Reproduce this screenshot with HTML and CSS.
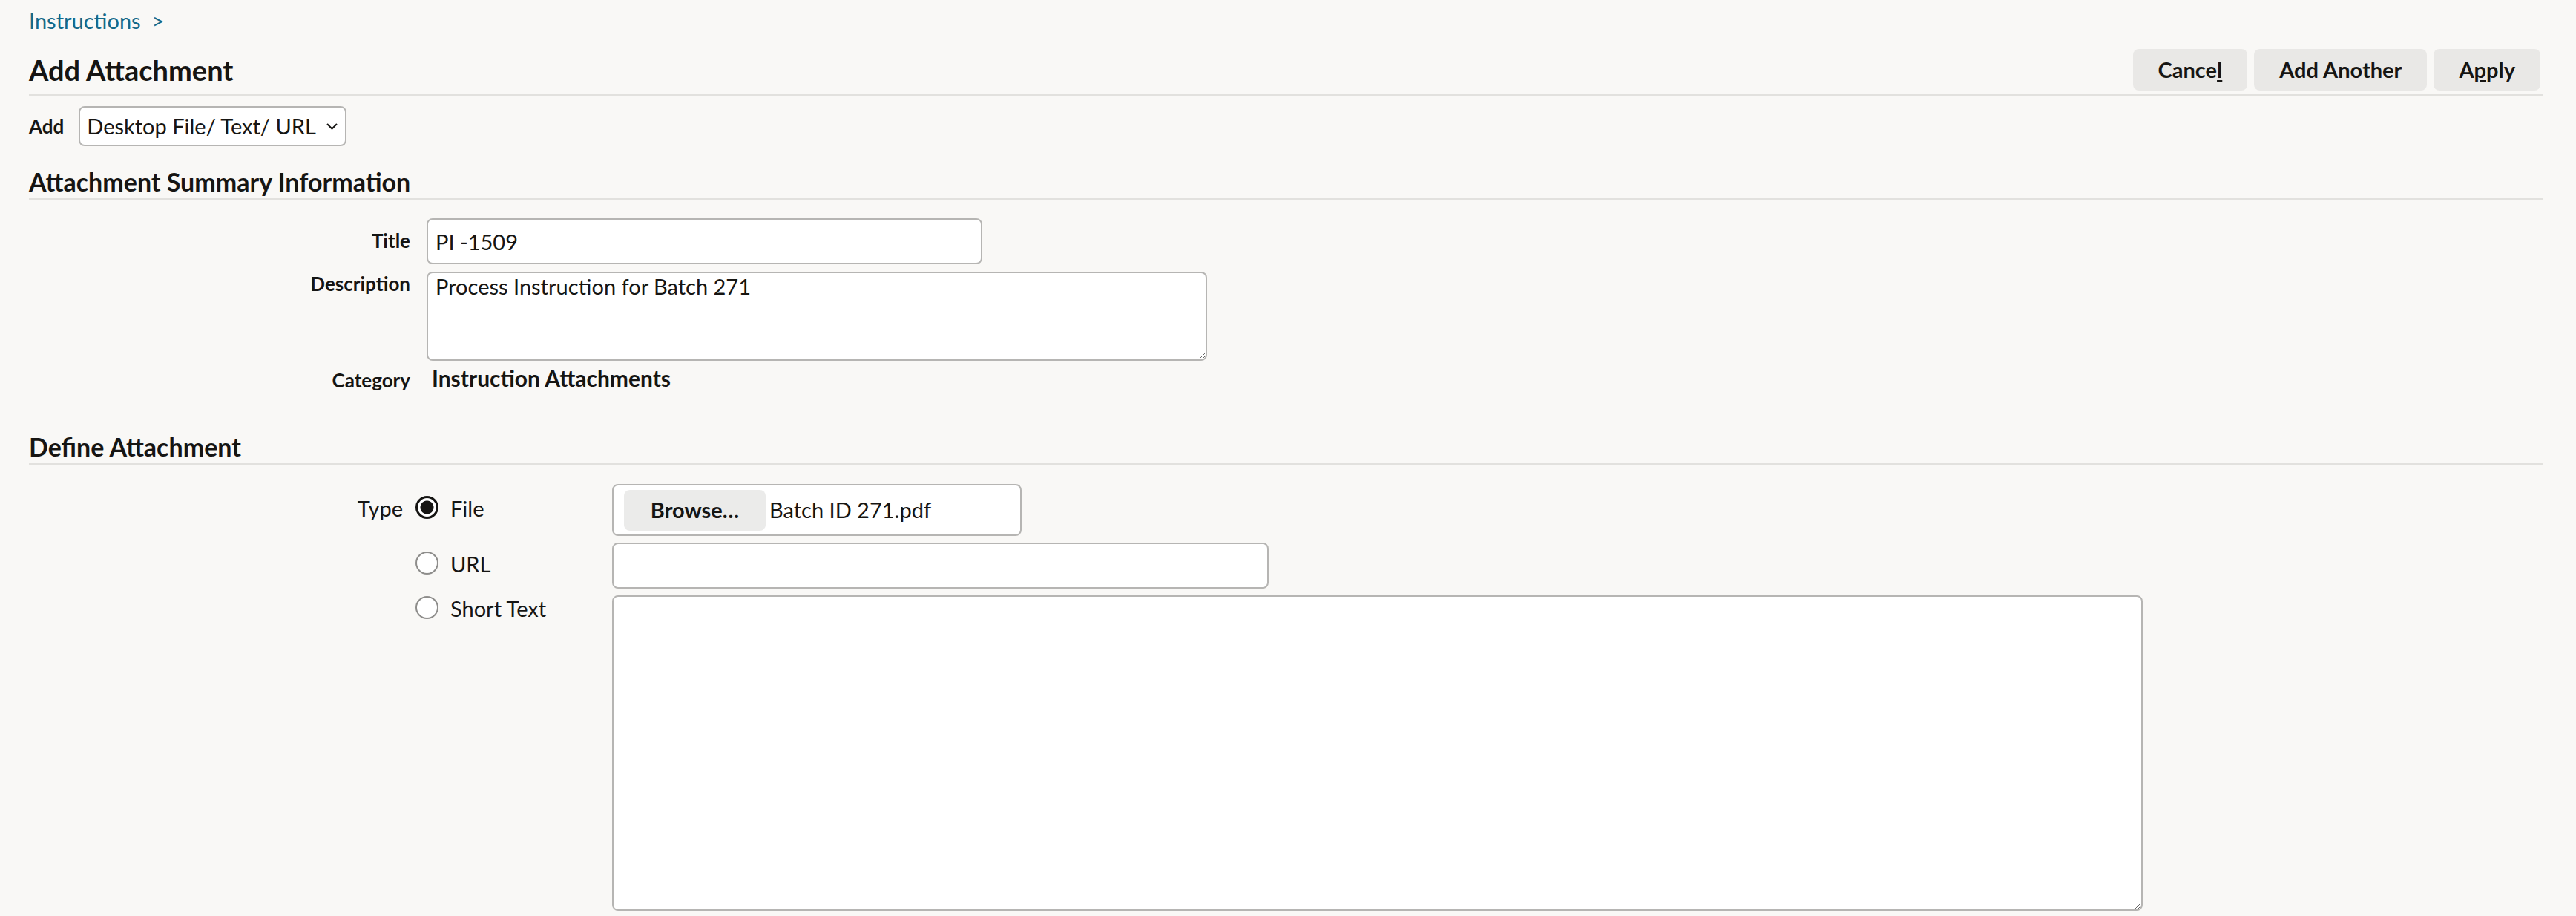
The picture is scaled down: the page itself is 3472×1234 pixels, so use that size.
FILE: index.html
```html
<!DOCTYPE html>
<html lang="en">
<head>
<meta charset="utf-8">
<title>Add Attachment</title>
<link rel="stylesheet" href="styles.css">
</head>
<body>
<div class="page">
  <nav class="crumbs"><a href="#">Instructions</a><span class="sep">&gt;</span></nav>

  <header class="page-head">
    <h1>Add Attachment</h1>
    <div class="actions">
      <button class="btn">Cance<u>l</u></button>
      <button class="btn">Add Another</button>
      <button class="btn">A<u>p</u>ply</button>
    </div>
  </header>

  <div class="add-row">
    <span class="add-label">Add</span>
    <div class="select">
      <span>Desktop File/ Text/ URL</span>
      <svg class="chev" width="15" height="9" viewBox="0 0 15 9"><polyline points="1,1 7.5,7.5 14,1" fill="none" stroke="#161513" stroke-width="2"/></svg>
    </div>
  </div>

  <h2 class="section">Attachment Summary Information</h2>
  <div class="summary">
    <div class="flabel title-label">Title</div>
    <input class="field title-input" type="text" value="PI -1509">
    <div class="flabel">Description</div>
    <textarea class="field desc">Process Instruction for Batch 271</textarea>
    <div class="flabel">Category</div>
    <div class="value">Instruction Attachments</div>
  </div>

  <h2 class="section define-head">Define Attachment</h2>
  <div class="define">
    <div class="dlabel">Type</div>
    <label class="opt r1"><input type="radio" name="type" checked><span>File</span></label>
    <div class="filebox"><span class="browse">Browse…</span><span class="fname">Batch ID 271.pdf</span></div>

    <div></div>
    <label class="opt r2"><input type="radio" name="type"><span>URL</span></label>
    <input class="field url" type="text" value="">

    <div></div>
    <label class="opt r3"><input type="radio" name="type"><span>Short Text</span></label>
    <textarea class="field shorttext"></textarea>
  </div>
</div>
</body>
</html>
```
FILE: styles.css
```css
html, body {
  margin: 0;
  background: #f9f8f6;
}
body {
  color: #161513;
  font-family: Lato, "Noto Sans", sans-serif;
  font-size: 29px;
  line-height: 36px;
}
.page {
  padding: 10px 44px 0 39px;
}
.crumbs {
  font-size: 29px;
  line-height: 36px;
  color: #13698a;
}
.crumbs a {
  color: #13698a;
  text-decoration: none;
}
.crumbs .sep {
  margin-left: 15px;
}
.page-head {
  display: flex;
  align-items: center;
  justify-content: space-between;
  margin-top: 20px;
  padding-bottom: 5px;
  border-bottom: 2px solid #e2e1de;
}
.page-head h1 {
  margin: 0;
  font-size: 38px;
  line-height: 44px;
  font-weight: 700;
}
.actions {
  display: flex;
  gap: 9px;
  padding-right: 4px;
}
.btn {
  height: 56px;
  padding: 0 34px;
  border: 0;
  border-radius: 8px;
  background: #e9e8e6;
  color: #161513;
  font-family: Lato, "Noto Sans", sans-serif;
  font-size: 29px;
  font-weight: 700;
  line-height: 56px;
}
.btn u {
  text-underline-offset: 3px;
}
.add-row {
  display: flex;
  align-items: center;
  gap: 20px;
  margin-top: 14px;
}
.add-label {
  font-size: 26px;
  font-weight: 700;
  line-height: 32px;
}
.select {
  box-sizing: border-box;
  width: 361px;
  height: 54px;
  display: flex;
  align-items: center;
  justify-content: space-between;
  padding: 0 10px 0 9px;
  background: #fff;
  border: 2px solid #b6b5b3;
  border-radius: 8px;
  font-size: 29px;
  line-height: 36px;
}
.chev {
  display: block;
}
.section {
  margin: 28px 0 0;
  font-size: 34px;
  line-height: 40px;
  font-weight: 700;
  padding-bottom: 2px;
  border-bottom: 2px solid #e2e1de;
}
.define-head {
  margin-top: 54px;
}
.summary {
  display: grid;
  grid-template-columns: 514px 1fr;
  column-gap: 22px;
  row-gap: 10px;
  margin-top: 25px;
  align-items: start;
}
.flabel {
  text-align: right;
  font-size: 26px;
  font-weight: 700;
  line-height: 32px;
}
.title-label {
  padding-top: 14px;
}
.field {
  box-sizing: border-box;
  display: block;
  margin: 0;
  background: #fff;
  border: 2px solid #b6b5b3;
  border-radius: 8px;
  color: #161513;
  font-family: Lato, "Noto Sans", sans-serif;
  font-size: 29px;
  line-height: 36px;
  padding: 0 10px;
  outline: none;
}
.title-input {
  width: 749px;
  height: 62px;
}
.desc {
  width: 1052px;
  height: 120px;
  resize: both;
  padding-top: 0;
}
.value {
  font-size: 30px;
  font-weight: 700;
  line-height: 26px;
  padding-left: 7px;
}
.define {
  display: grid;
  grid-template-columns: 521px 265px 1fr;
  row-gap: 9px;
  margin-top: 26px;
  align-items: start;
}
.dlabel {
  text-align: right;
  padding-right: 17px;
  padding-top: 15px;
  font-size: 29px;
  line-height: 36px;
}
.opt {
  display: flex;
  align-items: center;
  gap: 16px;
  height: 36px;
  font-size: 29px;
  line-height: 36px;
}
.opt.r1 { margin-top: 15px; }
.opt.r2 { margin-top: 11px; }
.opt.r3 { margin-top: 0; }
.opt input {
  appearance: none;
  -webkit-appearance: none;
  box-sizing: border-box;
  width: 31px;
  height: 31px;
  margin: -4px 0 0;
  border-radius: 50%;
  border: 2px solid #8e8d8b;
  background: #fff;
  flex: none;
}
.opt input:checked {
  border: 3px solid #161513;
  background: radial-gradient(circle at center, #161513 0 8.5px, #fff 9.5px);
}
.filebox {
  box-sizing: border-box;
  width: 552px;
  height: 70px;
  display: flex;
  align-items: center;
  gap: 5px;
  padding: 0 14px;
  background: #fff;
  border: 2px solid #b6b5b3;
  border-radius: 8px;
}
.browse {
  width: 191px;
  height: 55px;
  display: flex;
  align-items: center;
  justify-content: center;
  background: #ebebea;
  border-radius: 8px;
  font-size: 29px;
  font-weight: 700;
}
.fname {
  font-size: 29px;
}
.url {
  width: 885px;
  height: 62px;
}
.shorttext {
  width: 2063px;
  height: 425px;
  resize: both;
}
```
